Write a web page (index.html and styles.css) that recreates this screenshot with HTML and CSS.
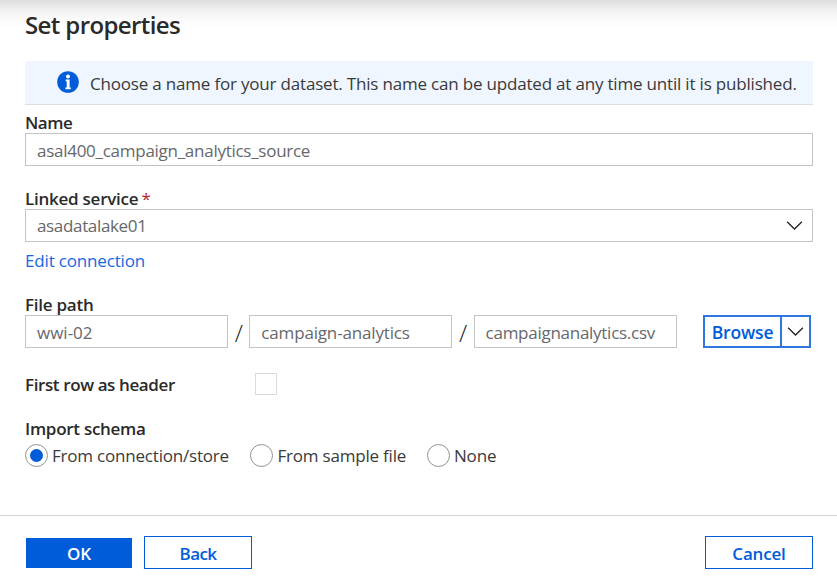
FILE: index.html
```html
<!DOCTYPE html>
<html lang="en">
<head>
<meta charset="utf-8">
<title>Set properties</title>
<link rel="stylesheet" href="styles.css">
</head>
<body>
<main class="panel">
  <h1 class="title">Set properties</h1>
  <div class="banner">
    <svg class="info-icon" viewBox="0 0 22 22"><circle cx="11" cy="11" r="10.8" fill="#015cda"/><circle cx="11" cy="5.6" r="2" fill="#fff"/><path d="M8.6 8.6h4v8h1.2v1.6H8.4v-1.6h1.3v-6.4H8.6z" fill="#fff"/></svg>
    <span class="banner-text">Choose a name for your dataset. This name can be updated at any time until it is published.</span>
  </div>

  <label class="label name-label">Name</label>
  <div class="input">asal400_campaign_analytics_source</div>

  <label class="label service-label">Linked service <span class="required">*</span></label>
  <div class="input select"><span class="service">asadatalake01</span>
    <svg class="chevron" viewBox="0 0 16 9"><path d="M.6.8 8 8 15.4.8"/></svg>
  </div>
  <a class="link">Edit connection</a>

  <label class="label path-label">File path</label>
  <div class="path">
    <div class="input part"><span class="wide">wwi-02</span></div>
    <span class="slash">/</span>
    <div class="input part"><span class="loose">campaign-analytics</span></div>
    <span class="slash">/</span>
    <div class="input part">campaignanalytics.csv</div>
    <div class="browse">
      <span class="browse-text">Browse</span>
      <span class="browse-menu"><svg class="chevron" viewBox="0 0 16 9"><path d="M.6.8 8 8 15.4.8"/></svg></span>
    </div>
  </div>

  <div class="header-row">
    <span class="label header-label">First row as header</span>
    <span class="checkbox"></span>
  </div>

  <div class="label schema-label">Import schema</div>
  <div class="radios">
    <span class="radio checked"></span><span class="radio-text first">From connection/store</span>
    <span class="radio"></span><span class="radio-text second">From sample file</span>
    <span class="radio"></span><span class="radio-text">None</span>
  </div>
</main>
<footer class="footer">
  <span class="button primary">OK</span>
  <span class="button back">Back</span>
  <span class="button cancel">Cancel</span>
</footer>
</body>
</html>
```
FILE: styles.css
```css
* { box-sizing: border-box; }

body {
  margin: 0;
  height: 579px;
  overflow: hidden;
  display: flex;
  flex-direction: column;
  font: 17px/22px "Open Sans", "Noto Sans", sans-serif;
  letter-spacing: -0.17px;
  color: #3a3a3a;
  white-space: nowrap;
  background: linear-gradient(#dedede, #e6e6e6 4px, #f3f3f3 12px, #fbfbfb 20px, #fff 29px) #fff;
}

.panel {
  height: 515px;
  padding: 9px 24px 0 25px;
}

.title {
  margin: 0;
  height: 52px;
  font-size: 24px;
  line-height: 32px;
  font-weight: 600;
  letter-spacing: -0.6px;
  color: #2a2a2a;
}

.banner {
  display: flex;
  align-items: center;
  height: 44px;
  padding-left: 32px;
  gap: 11px;
  background: #eff6ff;
  border-bottom: 1px solid #dcdfe4;
}

.info-icon { width: 22px; height: 22px; margin-top: -1px; }
.banner-text { padding-top: 2px; letter-spacing: -0.19px; }

.label {
  display: block;
  height: 22px;
  font-weight: 600;
  letter-spacing: -0.25px;
  color: #2a2a2a;
}

.name-label { margin-top: 6px; line-height: 24px; letter-spacing: -0.45px; }

.input {
  height: 33px;
  padding: 0 11px;
  line-height: 33px;
  background: #fff;
  border: 1.5px solid #c4c4c4;
  letter-spacing: -0.27px;
  color: #66686b;
}

.loose { letter-spacing: -0.16px; }
.service { letter-spacing: -0.34px; }
.wide { letter-spacing: 0; }

.service-label { margin-top: 21px; line-height: 24px; }
.required { margin-left: -1px; color: #b4262c; font-weight: 400; }

.select {
  display: flex;
  justify-content: space-between;
  align-items: center;
  padding-right: 9px;
}

.chevron {
  width: 17px;
  height: 9px;
  fill: none;
  stroke: #222;
  stroke-width: 1.3;
}

.link {
  display: block;
  margin-top: 8px;
  color: #1368e3;
}

.path-label { margin-top: 22px; line-height: 21px; height: 21px; }

.path { display: flex; }
.part { width: 203px; }
.slash { width: 21.3px; padding-top: 1px; font-size: 24px; font-weight: 300; line-height: 33px; text-align: center; color: #222; }

.browse {
  display: flex;
  width: 108px;
  height: 33px;
  margin-left: auto;
  margin-right: 2px;
  border: 2px solid #2f77e0;
}

.browse-text {
  width: 77px;
  border-right: 2px solid #2f77e0;
  font-size: 17.5px;
  font-weight: 600;
  line-height: 30px;
  text-align: center;
  color: #015cda;
}

.browse-menu { flex: 1; display: flex; align-items: center; justify-content: center; }

.header-row { display: flex; height: 22px; margin-top: 25px; }
.header-label { width: 230px; letter-spacing: -0.39px; }
.checkbox { width: 22px; height: 22px; margin-top: -1px; border: 1.5px solid #dadada; }

.schema-label { margin-top: 21px; line-height: 23px; letter-spacing: -0.28px; }

.radios { display: flex; align-items: center; height: 24px; margin-top: 4px; }

.radio {
  display: flex;
  align-items: center;
  justify-content: center;
  width: 23px;
  height: 23px;
  border: 1.2px solid #929292;
  border-radius: 50%;
}

.checked::after {
  content: "";
  width: 13px;
  height: 13px;
  border-radius: 50%;
  background: #015cda;
}

.radio-text { margin-left: 4px; padding-top: 1px; }
.first { width: 198.4px; letter-spacing: -0.2px; }
.second { width: 149.6px; letter-spacing: -0.2px; }

.footer {
  display: flex;
  align-items: flex-start;
  height: 64px;
  padding: 20px 24px 0 26px;
  border-top: 1px solid #d4d4d4;
}

.button {
  width: 108px;
  height: 33px;
  border: 1.5px solid #015cda;
  line-height: 33px;
  text-align: center;
  font-weight: 600;
  color: #015cda;
}

.primary { width: 106px; height: 30px; margin-top: 2px; line-height: 29px; background: #015cda; color: #fff; letter-spacing: 0; }
.back { margin-left: 12px; letter-spacing: -0.6px; }
.cancel { margin-left: auto; }
```
